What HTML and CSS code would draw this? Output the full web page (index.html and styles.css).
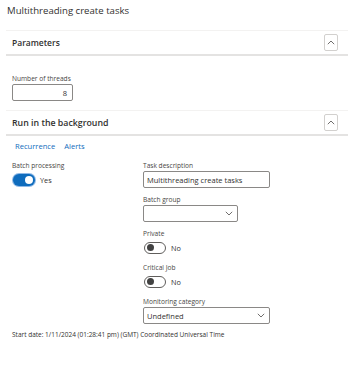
FILE: index.html
```html
<!DOCTYPE html>
<html lang="en">
<head>
<meta charset="utf-8">
<title>Multithreading create tasks</title>
<link rel="stylesheet" href="styles.css">
</head>
<body>
<div class="page">
  <h1 class="title">Multithreading create tasks</h1>

  <section class="section">
    <div class="section-header">
      <span class="section-title">Parameters</span>
      <button class="collapse" aria-label="Collapse">
        <svg width="8" height="5" viewBox="0 0 8 5"><path d="M0.8 4.2 L4 1 L7.2 4.2" fill="none" stroke="#605e5c" stroke-width="0.9"/></svg>
      </button>
    </div>
    <div class="section-body params">
      <div class="field">
        <label class="label">Number of threads</label>
        <div class="input num">8</div>
      </div>
    </div>
  </section>

  <section class="section">
    <div class="section-header">
      <span class="section-title">Run in the background</span>
      <button class="collapse" aria-label="Collapse">
        <svg width="8" height="5" viewBox="0 0 8 5"><path d="M0.8 4.2 L4 1 L7.2 4.2" fill="none" stroke="#605e5c" stroke-width="0.9"/></svg>
      </button>
    </div>
    <div class="section-body bg">
      <div class="tabs">
        <a class="tab">Recurrence</a>
        <a class="tab">Alerts</a>
      </div>
      <div class="columns">
        <div class="col">
          <div class="field">
            <label class="label">Batch processing</label>
            <div class="toggle-row">
              <span class="toggle on"><span class="knob"></span></span>
              <span class="toggle-text">Yes</span>
            </div>
          </div>
        </div>
        <div class="col">
          <div class="field">
            <label class="label">Task description</label>
            <div class="input wide">Multithreading create tasks</div>
          </div>
          <div class="field">
            <label class="label">Batch group</label>
            <div class="input select narrow">
              <span></span>
              <svg width="8" height="5" viewBox="0 0 8 5"><path d="M0.8 0.8 L4 4 L7.2 0.8" fill="none" stroke="#605e5c" stroke-width="0.9"/></svg>
            </div>
          </div>
          <div class="field">
            <label class="label">Private</label>
            <div class="toggle-row">
              <span class="toggle off"><span class="knob"></span></span>
              <span class="toggle-text">No</span>
            </div>
          </div>
          <div class="field">
            <label class="label">Critical Job</label>
            <div class="toggle-row">
              <span class="toggle off"><span class="knob"></span></span>
              <span class="toggle-text">No</span>
            </div>
          </div>
          <div class="field">
            <label class="label">Monitoring category</label>
            <div class="input select wide">
              <span>Undefined</span>
              <svg width="8" height="5" viewBox="0 0 8 5"><path d="M0.8 0.8 L4 4 L7.2 0.8" fill="none" stroke="#605e5c" stroke-width="0.9"/></svg>
            </div>
          </div>
        </div>
      </div>
      <p class="start-date">Start date: 1/11/2024 (01:28:41 pm) (GMT) Coordinated Universal Time</p>
    </div>
  </section>
</div>
</body>
</html>
```

FILE: styles.css
```css
* { box-sizing: border-box; }
html, body { margin: 0; padding: 0; background: #fff; }
body {
  font-family: "Open Sans", "Noto Sans", sans-serif;
  color: #323130;
}
.page {
  padding: 4px 0 0 6px;
}
.title {
  margin: 0 0 0 1px;
  font-size: 9.6px;
  font-weight: 400;
  line-height: 14px;
  height: 14px;
}
.section-header {
  height: 26px;
  border-top: 1px solid #f3f2f1;
  border-bottom: 2px solid #e4e3e2;
  display: flex;
  align-items: center;
  justify-content: space-between;
  padding: 0 10px 0 6px;
}
.section:first-of-type { margin-top: 12px; }
.section-title {
  font-size: 8.5px;
  font-weight: 600;
}
.section:last-of-type .section-title { font-size: 8.8px; }
.collapse {
  width: 14px;
  height: 17px;
  padding: 0;
  border: 1px solid #d2d0ce;
  border-radius: 2px;
  background: #fff;
  display: flex;
  align-items: center;
  justify-content: center;
}
.section-body { padding-left: 6px; }
.params { padding-top: 18px; padding-bottom: 9px; }
.field { display: flex; flex-direction: column; }
.label {
  font-size: 6.6px;
  line-height: 10px;
  height: 10px;
  color: #484644;
}
.input {
  height: 17px;
  border: 1px solid #8a8886;
  border-radius: 2px;
  font-size: 7.5px;
  display: flex;
  align-items: center;
  padding: 0 3px;
  color: #323130;
}
.num {
  width: 61px;
  justify-content: flex-end;
  padding-right: 5px;
}
.bg { padding-top: 5px; }
.tabs { display: flex; gap: 9px; height: 10px; line-height: 10px; padding-left: 3px; margin-bottom: 10px; }
.tab { color: #0f6cbd; font-size: 7.6px; }
.columns { display: grid; grid-template-columns: 131px 1fr; }
.col { display: flex; flex-direction: column; gap: 7px; }
.wide { width: 127px; }
.narrow { width: 95px; }
.select { justify-content: space-between; padding-right: 4px; }
.toggle-row { height: 17px; display: flex; align-items: center; gap: 5px; padding-left: 1px; }
.toggle {
  width: 22px;
  height: 12px;
  border-radius: 6px;
  display: flex;
  align-items: center;
  padding: 0 2px;
}
.toggle.on { background: #0f6cbd; justify-content: flex-end; box-shadow: 0 0 0 1px #8fb9e6; }
.toggle.off { border: 1px solid #605e5c; background: #fff; justify-content: flex-start; padding: 0 1.5px; }
.knob { width: 8px; height: 8px; border-radius: 50%; }
.on .knob { background: #fff; }
.off .knob { background: #424242; width: 7px; height: 7px; }
.toggle-text { font-size: 7.3px; color: #323130; }
.start-date {
  margin: 6px 0 0;
  font-size: 6.5px;
  line-height: 10px;
  color: #323130;
}
```
